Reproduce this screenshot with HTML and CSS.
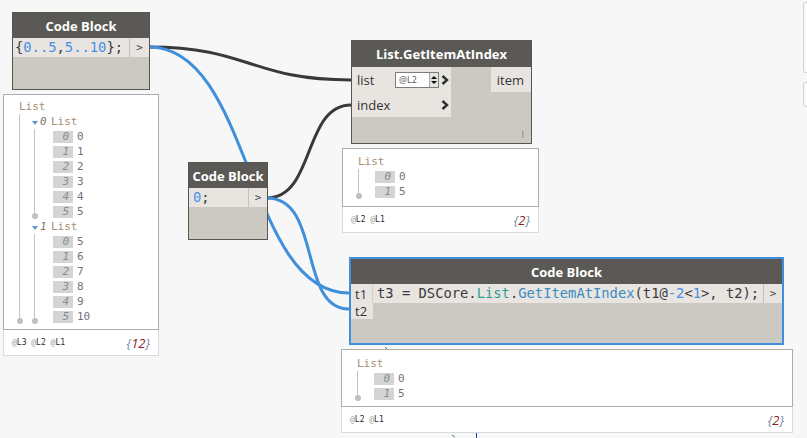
FILE: index.html
```html
<!DOCTYPE html>
<html>
<head>
<meta charset="utf-8">
<link rel="stylesheet" href="styles.css">
</head>
<body>
<div class="canvas">
  <svg class="wires" width="807" height="438" viewBox="0 0 807 438">
    <path d="M149,47 C250,47 250,80 351,80" class="w dark"/>
    <path d="M149,47 C252,47 246,293 349,293" class="w blue"/>
    <path d="M267,198 C315,198 303,105 351,105" class="w dark"/>
    <path d="M267,198 C322,198 298,309 349,309" class="w blue"/>
    <line x1="476.5" y1="431" x2="476.5" y2="438" stroke="#2040d0" stroke-width="1"/>
    <path d="M452,435 L455,437" stroke="#2a9a3a" stroke-width="1"/>
    <path d="M385,347 L387,349" stroke="#2a9a3a" stroke-width="1"/>
  </svg>

  <div class="edge e1"></div>
  <div class="edge e2"></div>

  <div class="node cb1">
    <div class="title">Code Block</div>
    <div class="coderow">
      <div class="code pl2"><span>{</span><span class="num">0..5</span><span>,</span><span class="num">5..10</span><span>};</span></div>
      <div class="out">&gt;</div>
    </div>
  </div>

  <div class="preview pv1">
    <div class="pv-body">
      <div class="row lbl">List</div>
      <div class="lvl outer">
        <div class="row sub"><span class="tri"></span><span class="subi">0</span><span class="lbl">List</span></div>
        <div class="lvl inner">
          <div class="row"><span class="idx">0</span><span class="val">0</span></div>
          <div class="row"><span class="idx">1</span><span class="val">1</span></div>
          <div class="row"><span class="idx">2</span><span class="val">2</span></div>
          <div class="row"><span class="idx">3</span><span class="val">3</span></div>
          <div class="row"><span class="idx">4</span><span class="val">4</span></div>
          <div class="row"><span class="idx">5</span><span class="val">5</span></div>
        </div>
        <div class="row sub"><span class="tri"></span><span class="subi">1</span><span class="lbl">List</span></div>
        <div class="lvl inner">
          <div class="row"><span class="idx">0</span><span class="val">5</span></div>
          <div class="row"><span class="idx">1</span><span class="val">6</span></div>
          <div class="row"><span class="idx">2</span><span class="val">7</span></div>
          <div class="row"><span class="idx">3</span><span class="val">8</span></div>
          <div class="row"><span class="idx">4</span><span class="val">9</span></div>
          <div class="row"><span class="idx">5</span><span class="val">10</span></div>
        </div>
      </div>
    </div>
    <div class="pv-foot">
      <div class="levels"><span class="at">@</span>L3 <span class="at">@</span>L2 <span class="at">@</span>L1</div>
      <div class="count"><span class="br">{</span>12<span class="br">}</span></div>
    </div>
  </div>

  <div class="node gia">
    <div class="title">List.GetItemAtIndex</div>
    <div class="ports">
      <div class="ins">
        <div class="in">
          <span class="plbl">list</span>
          <div class="spin"><span class="stxt">@L2</span><span class="sarr"><i class="up"></i><i class="dn"></i></span></div>
          <svg class="chev" width="8" height="10" viewBox="0 0 8 10"><polyline points="1.5,1 6,5 1.5,9" fill="none" stroke="#2e2e2e" stroke-width="2.4"/></svg>
        </div>
        <div class="in">
          <span class="plbl">index</span>
          <svg class="chev" width="8" height="10" viewBox="0 0 8 10"><polyline points="1.5,1 6,5 1.5,9" fill="none" stroke="#2e2e2e" stroke-width="2.4"/></svg>
        </div>
      </div>
      <div class="outs">
        <div class="o">item</div>
      </div>
    </div>
    <div class="nfoot">I</div>
  </div>

  <div class="preview pv2">
    <div class="pv-body">
      <div class="row lbl">List</div>
      <div class="lvl flat">
        <div class="row"><span class="idx">0</span><span class="val">0</span></div>
        <div class="row"><span class="idx">1</span><span class="val">5</span></div>
      </div>
    </div>
    <div class="pv-foot">
      <div class="levels"><span class="at">@</span>L2 <span class="at">@</span>L1</div>
      <div class="count"><span class="br">{</span>2<span class="br">}</span></div>
    </div>
  </div>

  <div class="node cb3">
    <div class="title">Code Block</div>
    <div class="coderow">
      <div class="code pl4"><span class="num">0</span><span>;</span></div>
      <div class="out">&gt;</div>
    </div>
  </div>

  <div class="node cb4">
    <div class="title">Code Block</div>
    <div class="coderow">
      <div class="pin">t1</div>
      <div class="code pl4">t3 = DSCore.<span class="cls">List</span>.<span class="fn">GetItemAtIndex</span>(t1@<span class="num">-2</span>&lt;<span class="num">1</span>&gt;, t2);</div>
      <div class="out">&gt;</div>
    </div>
    <div class="pinrow">
      <div class="pin">t2</div>
    </div>
  </div>

  <div class="preview pv3">
    <div class="pv-body">
      <div class="row lbl">List</div>
      <div class="lvl flat">
        <div class="row"><span class="idx">0</span><span class="val">0</span></div>
        <div class="row"><span class="idx">1</span><span class="val">5</span></div>
      </div>
    </div>
    <div class="pv-foot">
      <div class="levels"><span class="at">@</span>L2 <span class="at">@</span>L1</div>
      <div class="count"><span class="br">{</span>2<span class="br">}</span></div>
    </div>
  </div>
</div>
</body>
</html>
```

FILE: styles.css
```css
* { box-sizing: border-box; }
html, body { margin: 0; padding: 0; }
body { background: #f7f7f7; font-family: "Open Sans", "Liberation Sans", sans-serif; }

.canvas { position: relative; width: 807px; height: 438px; overflow: hidden; background: #f7f7f7; }
.wires { position: absolute; left: 0; top: 0; }
.w { fill: none; stroke-width: 3; stroke-linecap: round; }
.dark { stroke: #393939; }
.blue { stroke: #3f8fdb; }

.edge { position: absolute; left: 803px; width: 14px; border: 1px solid #d0d0d0; border-radius: 3px; background: #fbfbfb; }
.e1 { top: 2px; height: 71px; }
.e2 { top: 82px; height: 25px; }

/* nodes */
.node { position: absolute; display: flex; flex-direction: column; border: 1px solid #57554f; background: #ccc8c2; }
.title { flex: none; height: 25px; background: #5b5955; color: #fff; font-weight: 700; font-size: 13px; display: flex; align-items: center; justify-content: center; }
.coderow { flex: none; display: flex; height: 19px; background: #e8e5e1; }
.code { flex: 1; font-family: "DejaVu Sans Mono", monospace; font-size: 13.8px; line-height: 19px; color: #3a3a3a; white-space: nowrap; overflow: hidden; }
.pl2 { padding-left: 2px; }
.pl4 { padding-left: 4px; }
.num { color: #4a8fe6; }
.cls { color: #2f9c97; }
.fn { color: #3a8cc2; }
.out { flex: none; width: 20px; border-left: 1px solid #c4c0ba; display: flex; align-items: center; justify-content: center; font-family: "DejaVu Sans Mono", monospace; font-size: 11px; color: #444; }

.cb1 { left: 12px; top: 12px; width: 138px; height: 78px; }
.cb3 { left: 188px; top: 162px; width: 80px; height: 78px; }
.cb3 .out { width: 19px; }

.cb4 { left: 349px; top: 257px; width: 435px; height: 88px; border: 2px solid #3f8fdc; }
.cb4 .out { width: 19px; }
.pin { flex: none; width: 22px; height: 100%; display: flex; align-items: center; padding-left: 4px; font-size: 13px; color: #333; background: #e8e5e1; border-right: 1px solid #d3cfc9; }
.pinrow { flex: none; display: flex; height: 16px; }
.pinrow .pin { border-right: none; }

/* List.GetItemAtIndex */
.gia { left: 351px; top: 40px; width: 181px; height: 104px; }
.gia .title { height: 26px; }
.ports { flex: none; display: flex; justify-content: space-between; }
.ins { display: flex; flex-direction: column; width: 99px; }
.in { height: 25px; background: #e8e5e1; display: flex; align-items: center; padding-left: 5px; padding-right: 1px; font-size: 13px; color: #333; }
.plbl { flex: 1; }
.spin { display: flex; height: 16px; border: 1px solid #7d7d7d; background: #fff; margin-right: 2px; }
.stxt { width: 33px; font-size: 9px; line-height: 14px; color: #555; padding-left: 3px; }
.sarr { width: 9px; background: #e4e4e4; border-left: 1px solid #a8a8a8; display: flex; flex-direction: column; align-items: center; justify-content: center; gap: 2px; }
.up { display: block; width: 0; height: 0; border-left: 3px solid transparent; border-right: 3px solid transparent; border-bottom: 3px solid #111; }
.dn { display: block; width: 0; height: 0; border-left: 3px solid transparent; border-right: 3px solid transparent; border-top: 3px solid #111; }
.chev { flex: none; margin-right: 1px; }
.outs { width: 40px; }
.o { height: 25px; background: #e8e5e1; display: flex; align-items: center; justify-content: flex-end; padding-right: 7px; font-size: 13px; color: #333; }
.nfoot { margin-top: auto; display: flex; justify-content: flex-end; padding: 0 7px 2px 0; font-size: 9px; color: #777; }

/* previews */
.preview { position: absolute; display: flex; flex-direction: column; }
.pv-body { background: #fff; border: 1px solid #acacac; font-family: "DejaVu Sans Mono", monospace; font-size: 11px; padding-left: 15px; }
.pv-foot { flex: none; height: 26px; background: #fff; border: 1px solid #dadada; border-top: none; display: flex; align-items: center; justify-content: space-between; padding: 0 8px; }

.pv1 { left: 3px; top: 94px; width: 156px; }
.pv1 .pv-body { padding-top: 4px; padding-bottom: 5px; }
.pv2 { left: 342px; top: 148px; width: 197px; }
.pv2 .pv-body { padding-top: 5px; padding-bottom: 7px; }
.pv3 { left: 341px; top: 349px; width: 452px; }
.pv3 .pv-body { padding-top: 6px; padding-bottom: 5px; }

.row { height: 15px; line-height: 15px; display: flex; align-items: center; white-space: nowrap; }
.lbl { color: #a88d74; }
.lvl { border-left: 1px solid #c3c3c3; position: relative; }
.lvl::after { content: ""; position: absolute; left: -3.5px; bottom: 0; width: 6px; height: 6px; border-radius: 50%; background: #c0c0c0; }
.outer { padding-left: 12px; }
.inner { margin-left: 2px; padding-left: 18px; }
.flat { padding-left: 16px; }
.tri { width: 0; height: 0; border-left: 3px solid transparent; border-right: 3px solid transparent; border-top: 4px solid #5a97d2; margin-top: 3px; }
.subi { font-style: italic; color: #8a7565; margin-left: 2px; width: 11px; }
.idx { width: 20px; height: 12px; line-height: 12px; background: #d4d4d4; color: #8c8c8c; font-style: italic; text-align: right; padding-right: 4px; }
.val { margin-left: 4px; color: #757079; }

.levels { font-family: "DejaVu Sans Mono", monospace; font-size: 8px; color: #2a2a2a; white-space: pre; }
.at { color: #9a9a9a; }
.count { font-style: italic; font-size: 13px; color: #8b1c1c; }
.br { color: #7c8ca3; }
```
